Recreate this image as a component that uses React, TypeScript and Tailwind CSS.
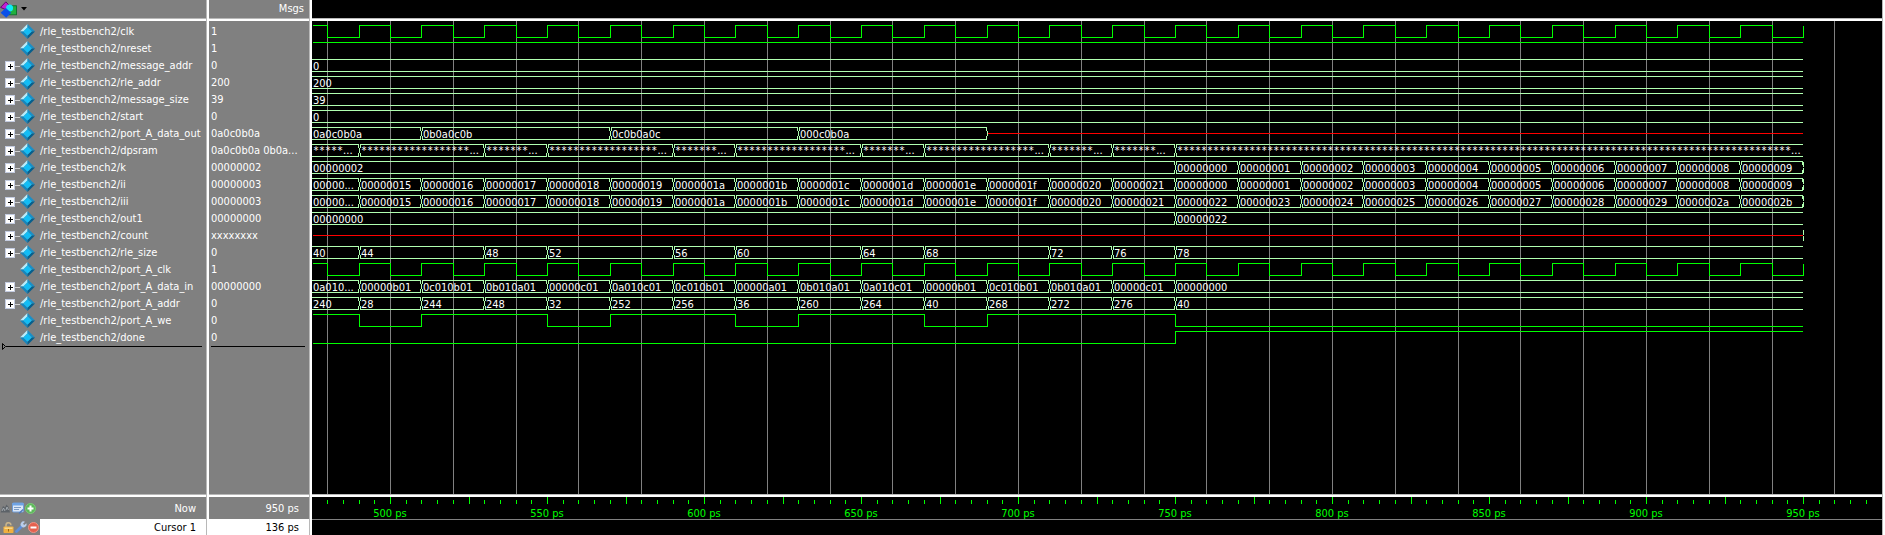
import React from "react";

/* ---------- time axis ---------- */
const START = 475.2;
const END = 950;
const PX_PER_PS = 3.14;
const px = (t: number) => (t <= START ? 0 : Math.round(78 + (t - 500) * PX_PER_PS));
const ROW = 17;
const SWING = 12;
const FIRST_TOP = 4;

/* ---------- signal model ---------- */
type Segment = [time: number, value: string];
type Signal = { name: string; msg: string } & (
  | { kind: "bit"; edges: [number, 0 | 1][] }
  | { kind: "bus"; segs: Segment[]; closed?: boolean; undefinedFrom?: number }
);

const clock: [number, 0 | 1][] = [[START, 1]];
for (let t = 480; t <= END; t += 10) clock.push([t, t % 20 === 0 ? 0 : 1]);

const every20 = (values: string[]): Segment[] => values.map((v, i) => [490 + i * 20, v]);
const hex = (n: number) => n.toString(16).padStart(8, "0");
const range = (n: number) => Array.from({ length: n }, (_, i) => i);
const stars = (n: number) => "*".repeat(n);

const signals: Signal[] = [
  { name: "clk", msg: "1", kind: "bit", edges: clock },
  { name: "nreset", msg: "1", kind: "bit", edges: [[START, 1]] },
  { name: "message_addr", msg: "0", kind: "bus", segs: [[START, "0"]] },
  { name: "rle_addr", msg: "200", kind: "bus", segs: [[START, "200"]] },
  { name: "message_size", msg: "39", kind: "bus", segs: [[START, "39"]] },
  { name: "start", msg: "0", kind: "bus", segs: [[START, "0"]] },
  {
    name: "port_A_data_out", msg: "0a0c0b0a", kind: "bus", undefinedFrom: 690,
    segs: [[START, "0a0c0b0a"], [510, "0b0a0c0b"], [570, "0c0b0a0c"], [630, "000c0b0a"]],
  },
  {
    name: "dpsram", msg: "0a0c0b0a 0b0a...", kind: "bus",
    segs: [
      [START, stars(5)], [490, stars(18)], [530, stars(7)], [550, stars(18)], [590, stars(7)],
      [610, stars(18)], [650, stars(7)], [670, stars(18)], [710, stars(7)], [730, stars(7)], [750, stars(102)],
    ],
  },
  {
    name: "k", msg: "00000002", kind: "bus", closed: true,
    segs: [[START, "00000002"], ...range(10).map((i): Segment => [750 + i * 20, hex(i)])],
  },
  {
    name: "ii", msg: "00000003", kind: "bus", closed: true,
    segs: [[START, "00000..."], ...every20(range(23).map((i) => (i < 13 ? hex(0x15 + i) : hex(i - 13))))],
  },
  {
    name: "iii", msg: "00000003", kind: "bus", closed: true,
    segs: [[START, "00000..."], ...every20(range(23).map((i) => hex(0x15 + i)))],
  },
  { name: "out1", msg: "00000000", kind: "bus", segs: [[START, "00000000"], [750, "00000022"]] },
  { name: "count", msg: "xxxxxxxx", kind: "bus", undefinedFrom: START, closed: true, segs: [] },
  {
    name: "rle_size", msg: "0", kind: "bus",
    segs: [
      [START, "40"], [490, "44"], [530, "48"], [550, "52"], [590, "56"], [610, "60"],
      [650, "64"], [670, "68"], [710, "72"], [730, "76"], [750, "78"],
    ],
  },
  { name: "port_A_clk", msg: "1", kind: "bit", edges: clock },
  {
    name: "port_A_data_in", msg: "00000000", kind: "bus",
    segs: [
      [START, "0a010..."],
      ...every20([
        "00000b01", "0c010b01", "0b010a01", "00000c01", "0a010c01", "0c010b01", "00000a01",
        "0b010a01", "0a010c01", "00000b01", "0c010b01", "0b010a01", "00000c01", "00000000",
      ]),
    ],
  },
  {
    name: "port_A_addr", msg: "0", kind: "bus",
    segs: [
      [START, "240"],
      ...every20(["28", "244", "248", "32", "252", "256", "36", "260", "264", "40", "268", "272", "276", "40"]),
    ],
  },
  {
    name: "port_A_we", msg: "0", kind: "bit",
    edges: [[START, 1], [490, 0], [510, 1], [550, 0], [570, 1], [610, 0], [630, 1], [670, 0], [690, 1], [750, 0]],
  },
  { name: "done", msg: "0", kind: "bit", edges: [[START, 0], [750, 1]] },
];

/* ---------- waves ---------- */
function BitWave({ edges, top }: { edges: [number, 0 | 1][]; top: number }) {
  const y = (v: number) => top + (v ? 0 : SWING) + 0.5;
  let d = "";
  edges.forEach(([t, v], i) => {
    d += i === 0 ? `M1 ${y(v)}` : `H${px(t) + 0.5}V${y(v)}`;
  });
  if (edges[edges.length - 1][0] < END) d += `H${px(END)}`;
  return <path d={d} fill="none" stroke="#00ff00" shapeRendering="crispEdges" />;
}

function BusWave({ signal, top }: { signal: Extract<Signal, { kind: "bus" }>; top: number }) {
  const { segs, undefinedFrom, closed } = signal;
  const stop = undefinedFrom ?? END;
  const bottom = top + SWING;
  let d = "";
  segs.forEach(([t], i) => {
    const a = i === 0 ? 0 : px(t) + 1;
    const last = i === segs.length - 1;
    const b = px(last ? stop : segs[i + 1][0]);
    d += `M${a} ${top + 0.5}H${b}M${a} ${bottom + 0.5}H${b}`;
    if (i > 0) d += `M${a + 0.5} ${top}v4M${a + 0.5} ${bottom + 1}v-4M${a - 0.5} ${top + 4}v5`;
    if (!last || closed || undefinedFrom) d += `M${b - 0.5} ${top}v4M${b - 0.5} ${bottom + 1}v-4`;
  });
  if (closed) d += `M${px(END) + 0.5} ${top + 1}v5M${px(END) + 0.5} ${top + 7}v5`;
  else if (undefinedFrom) d += `M${px(stop) + 0.5} ${top + 4}v5`;
  const red = undefinedFrom === undefined ? null : `M${px(undefinedFrom) + 1} ${top + 6.5}H${px(END)}`;
  return (
    <g>
      <path d={d} fill="none" stroke="#b0ffb0" shapeRendering="crispEdges" />
      {red && <path d={red} fill="none" stroke="#ff0000" shapeRendering="crispEdges" />}
      {segs.map(([t, v]) => {
        const x = t === START ? 1 : px(t) + 2;
        return v.startsWith("*") ? (
          <text key={t} x={x} y={top + 10} fill="#ffffff" className="font-['DejaVu_Sans_Mono',monospace] text-[10px]">
            {v}
            <tspan className="font-['DejaVu_Sans_Condensed','DejaVu_Sans',sans-serif] text-[11px]">...</tspan>
          </text>
        ) : (
          <text key={t} x={x} y={top + 11} fill="#ffffff">
            {v}
          </text>
        );
      })}
    </g>
  );
}

function WaveView() {
  return (
    <svg className="block min-h-[340px] w-full flex-1 text-[11px]" role="img" aria-label="Waveforms">
      {range(25).map((i) => {
        const x = px(480 + i * 20);
        return <rect key={i} x={x} y="0" width="1" height="100%" fill="#808080" />;
      })}
      {signals.map((s, i) => {
        const top = FIRST_TOP + i * ROW;
        return s.kind === "bit" ? (
          <BitWave key={s.name} edges={s.edges} top={top} />
        ) : (
          <BusWave key={s.name} signal={s} top={top} />
        );
      })}
    </svg>
  );
}

function Ruler() {
  return (
    <svg className="block h-[22px] w-full text-[11px]" role="img" aria-label="Time ruler">
      {range(101).map((i) => {
        const t = 480 + i * 5;
        const major = t % 25 === 0;
        return <rect key={t} x={px(t)} y={major ? 0 : 3} width="1" height={major ? 7 : 4} fill="#00ff00" />;
      })}
      {range(10).map((i) => (
        <text key={i} x={px(500 + i * 50)} y="20" textAnchor="middle" fill="#00ff00">
          {500 + i * 50} ps
        </text>
      ))}
    </svg>
  );
}

/* ---------- icons ---------- */
function SignalIcon() {
  return (
    <svg width="15" height="15" viewBox="0 0 15 15" className="shrink-0" aria-hidden="true">
      <path d="M7.500 0L0 7.500L3.500 7.500L7.500 3.500Z" fill="#b8ecfb" />
      <path d="M7.500 0L15 7.500L11.500 7.500L7.500 3.500Z" fill="#1a8fc6" />
      <path d="M0 7.500L7.500 15L7.500 11.500L3.500 7.500Z" fill="#1686bd" />
      <path d="M15 7.500L7.500 15L7.500 11.500L11.500 7.500Z" fill="#075f8c" />
      <path d="M7.500 3.200L11.800 7.500L7.500 11.800L3.200 7.500Z" fill="#12bdf5" />
    </svg>
  );
}

function ObjectsIcon() {
  return (
    <svg width="17" height="17" viewBox="0 0 16 16" aria-hidden="true">
      <path d="M0.500 6L5.500 0.800L9.500 5L5 8Z" fill="#c020d0" stroke="#500060" strokeWidth="0.800" />
      <rect x="8" y="4.500" width="7.500" height="8.500" fill="#20b040" stroke="#0a6a28" strokeWidth="0.800" />
      <circle cx="9" cy="6.500" r="3.300" fill="#10e8f8" />
      <path d="M5.500 6.500L10.500 11L5.800 15.800L0.600 11Z" fill="#0a50e8" />
    </svg>
  );
}

function GateIcon() {
  return (
    <svg width="11" height="11" viewBox="0 0 11 11" aria-hidden="true">
      <path d="M0.500 9.500L3 3L5 4.500L6.500 1.500L8.500 4L10 9.500Z" fill="#5c6268" />
      <path d="M2 8L3.500 5L5 8M6 7L7 4L8.500 7" fill="none" stroke="#a9b0b6" strokeWidth="0.900" />
    </svg>
  );
}

function PanelIcon() {
  return (
    <svg width="12" height="12" viewBox="0 0 12 12" aria-hidden="true">
      <rect x="0.500" y="1" width="11" height="9" rx="1" fill="#dce8f8" stroke="#6f9cd8" />
      <rect x="0.500" y="1" width="11" height="2.500" fill="#6fa3e4" />
      <path d="M2 5.500H9M2 7.500H7" stroke="#7d9cc4" />
      <path d="M7 11.500L11 7.500" stroke="#5078b8" strokeWidth="1.200" />
    </svg>
  );
}

function RoundIcon({ plus }: { plus?: boolean }) {
  return (
    <svg width="11" height="11" viewBox="0 0 11 11" aria-hidden="true">
      <circle cx="5.500" cy="5.500" r="5" fill={plus ? "#5cb85a" : "#e4604e"} stroke={plus ? "#7cc878" : "#ee9284"} />
      <rect x="2.500" y="4.500" width="6" height="2" fill="#ffffff" />
      {plus && <rect x="4.500" y="2.500" width="2" height="6" fill="#ffffff" />}
    </svg>
  );
}

function LockIcon() {
  return (
    <svg width="11" height="11" viewBox="0 0 11 11" aria-hidden="true">
      <path d="M3 5V3.200A2.500 2.500 0 0 1 8 3.200" fill="none" stroke="#c9b48a" strokeWidth="1.500" />
      <rect x="0.500" y="4.500" width="10" height="6.500" rx="0.800" fill="#f0b040" />
      <rect x="1.500" y="5.500" width="8" height="1.500" fill="#f9d78a" />
      <rect x="5" y="7" width="1" height="2.500" fill="#9a6a18" />
    </svg>
  );
}

function WrenchIcon() {
  return (
    <svg width="12" height="12" viewBox="0 0 12 12" aria-hidden="true">
      <path d="M1.500 10.500L6.500 5.500" stroke="#5f8fd8" strokeWidth="2.800" strokeLinecap="round" />
      <path d="M10 0.800L8 2.800L9.200 4L11.300 2.200A3 3 0 0 1 6.500 5.600A3 3 0 0 1 10 0.800Z" fill="#b9cdea" />
    </svg>
  );
}

/* ---------- list parts ---------- */
function Divider() {
  return <div className="h-[3px] shrink-0 border-t border-[#b8b8b8] bg-white" />;
}

function ColumnEdge() {
  return <div className="w-[3px] shrink-0 border-l border-[#b8b8b8] bg-white" />;
}

function ExpandButton({ name }: { name: string }) {
  return (
    <button
      type="button"
      aria-label={`Expand ${name}`}
      className="flex size-[10px] shrink-0 items-center justify-center border border-[#c4cce0] bg-white"
    >
      <svg width="6" height="6" viewBox="0 0 6 6" aria-hidden="true" shapeRendering="crispEdges">
        <path d="M1 3.500H6M3.500 1V6" stroke="#000000" />
      </svg>
    </button>
  );
}

const paneText = "text-[11px] leading-[17px] text-white";

export default function App() {
  return (
    <main className="flex min-h-screen w-full overflow-hidden bg-[#808080] font-['DejaVu_Sans_Condensed','DejaVu_Sans',sans-serif]">
      <section aria-label="Signals" className={`flex w-[206px] shrink-0 flex-col ${paneText}`}>
        <header className="flex h-[18px] shrink-0 items-center">
          <button type="button" aria-label="Objects menu" className="flex items-center gap-1">
            <ObjectsIcon />
            <svg width="6" height="4" viewBox="0 0 6 4" aria-hidden="true">
              <path d="M0 0H6L3 3.500Z" fill="#000000" />
            </svg>
          </button>
        </header>
        <Divider />
        <div className="flex-1 pt-[2px]">
          <ul>
            {signals.map((s) => (
              <li key={s.name} className="flex h-[17px] items-center whitespace-nowrap">
                <span className="flex w-5 shrink-0 items-center pt-px pl-[5px]">
                  {s.kind === "bus" && (
                    <>
                      <ExpandButton name={s.name} />
                      <span className="h-px flex-1 bg-[#d0d0d0]" />
                    </>
                  )}
                </span>
                <SignalIcon />
                <span className="pl-[5px]">/rle_testbench2/{s.name}</span>
              </li>
            ))}
          </ul>
          <div className="-mt-[3px] flex items-center pl-[2px]">
            <svg width="4" height="7" viewBox="0 0 4 7" aria-hidden="true">
              <path d="M0.500 0.500V6.500L3.500 3.500Z" fill="none" stroke="#000000" />
            </svg>
            <div className="mr-1 h-px flex-1 bg-black" />
          </div>
        </div>
        <Divider />
        <div className="flex h-[22px] shrink-0 items-center pr-[10px]">
          <button type="button" aria-label="Toggle names"><GateIcon /></button>
          <button type="button" aria-label="Edit view" className="ml-px"><PanelIcon /></button>
          <button type="button" aria-label="Add cursor" className="ml-px"><RoundIcon plus /></button>
          <span className="flex-1 text-right">Now</span>
        </div>
        <div className="flex h-[16px] shrink-0">
          <div className="flex w-10 items-center gap-px pl-[3px]">
            <button type="button" aria-label="Lock cursor"><LockIcon /></button>
            <button type="button" aria-label="Cursor properties"><WrenchIcon /></button>
            <button type="button" aria-label="Delete cursor"><RoundIcon /></button>
          </div>
          <div className="flex-1 bg-white pr-[10px] text-right text-black">Cursor 1</div>
        </div>
      </section>

      <ColumnEdge />

      <section aria-label="Values" className={`flex w-[100px] shrink-0 flex-col ${paneText}`}>
        <header className="h-[18px] shrink-0 pr-[5px] text-right">Msgs</header>
        <Divider />
        <div className="flex-1 pt-[2px]">
          <ul className="pl-[2px]">
            {signals.map((s) => (
              <li key={s.name} className="h-[17px] whitespace-nowrap">{s.msg}</li>
            ))}
          </ul>
          <div className="mr-1 ml-[2px] h-px bg-black" />
        </div>
        <Divider />
        <div className="flex h-[22px] shrink-0 items-center justify-end pr-[10px]">950 ps</div>
        <div className="h-[16px] shrink-0 bg-white pr-[10px] text-right text-black">136 ps</div>
      </section>

      <ColumnEdge />

      <section aria-label="Waves" className="flex min-w-0 flex-1 flex-col bg-black">
        <div className="h-[18px] shrink-0" />
        <Divider />
        <WaveView />
        <Divider />
        <Ruler />
        <div className="h-[16px] shrink-0 border-t border-[#808080]" />
      </section>

      <ColumnEdge />
    </main>
  );
}
